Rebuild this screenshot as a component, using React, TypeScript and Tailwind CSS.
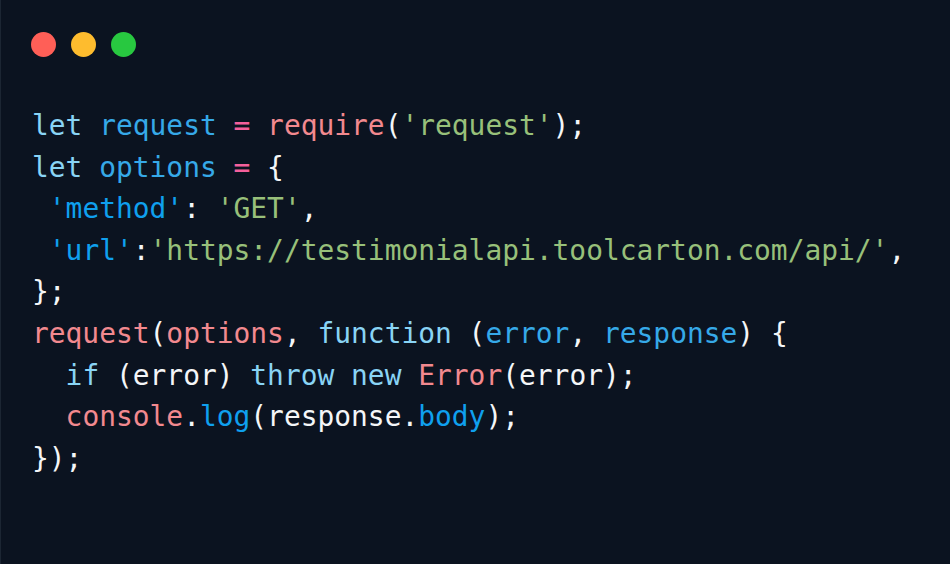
const kw = 'text-[#89d4f5]';
const vr = 'text-[#36a9e8]';
const op = 'text-[#f5609c]';
const fn = 'text-[#f2898f]';
const st = 'text-[#98c07a]';
const pr = 'text-[#0fa0ee]';
const pl = 'text-[#f4f6f8]';

type Tok = [string, string];

const lines: Tok[][] = [
  [[kw, 'let'], [pl, ' '], [vr, 'request'], [pl, ' '], [op, '='], [pl, ' '], [fn, 'require'], [pl, '('], [st, "'request'"], [pl, ');']],
  [[kw, 'let'], [pl, ' '], [vr, 'options'], [pl, ' '], [op, '='], [pl, ' {']],
  [[pl, ' '], [pr, "'method'"], [pl, ': '], [st, "'GET'"], [pl, ',']],
  [[pl, ' '], [pr, "'url'"], [pl, ':'], [st, "'https://testimonialapi.toolcarton.com/api/'"], [pl, ',']],
  [[pl, '};']],
  [[fn, 'request'], [pl, '('], [fn, 'options'], [pl, ', '], [kw, 'function'], [pl, ' ('], [vr, 'error'], [pl, ', '], [vr, 'response'], [pl, ') {']],
  [[pl, '  '], [kw, 'if'], [pl, ' (error) '], [kw, 'throw'], [pl, ' '], [kw, 'new'], [pl, ' '], [fn, 'Error'], [pl, '(error);']],
  [[pl, '  '], [fn, 'console'], [pl, '.'], [pr, 'log'], [pl, '(response.'], [pr, 'body'], [pl, ');']],
  [[pl, '});']],
];

export default function App() {
  return (
    <div className="w-[950px] h-[564px] bg-[#0b1320] border-l border-[#1c2633] overflow-hidden">
      {/* window dots */}
      <div className="flex gap-[15px] pl-[30px] pt-[32px]">
        <div className="w-[25px] h-[25px] rounded-full bg-[#ff5f57]" />
        <div className="w-[25px] h-[25px] rounded-full bg-[#febc2e]" />
        <div className="w-[25px] h-[25px] rounded-full bg-[#28c840]" />
      </div>

      {/* code */}
      <pre className="pl-[31px] pt-[48px] font-['DejaVu_Sans_Mono','Liberation_Mono',monospace] text-[27.9px] leading-[41.6px]">
        {lines.map((line, i) => (
          <div key={i}>
            {line.map(([c, t], j) => (
              <span key={j} className={c}>{t}</span>
            ))}
          </div>
        ))}
      </pre>
    </div>
  );
}
